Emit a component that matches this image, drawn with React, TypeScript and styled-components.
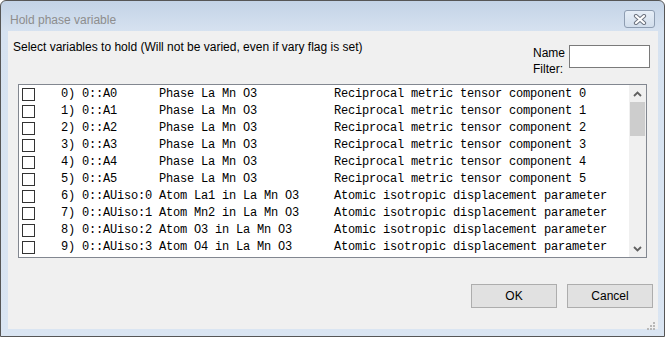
import styled, { createGlobalStyle } from 'styled-components';

// Data
const ROWS: { name: string; phase: string; desc: string }[] = [
  { name: '0::A0', phase: 'Phase La Mn O3', desc: 'Reciprocal metric tensor component 0' },
  { name: '0::A1', phase: 'Phase La Mn O3', desc: 'Reciprocal metric tensor component 1' },
  { name: '0::A2', phase: 'Phase La Mn O3', desc: 'Reciprocal metric tensor component 2' },
  { name: '0::A3', phase: 'Phase La Mn O3', desc: 'Reciprocal metric tensor component 3' },
  { name: '0::A4', phase: 'Phase La Mn O3', desc: 'Reciprocal metric tensor component 4' },
  { name: '0::A5', phase: 'Phase La Mn O3', desc: 'Reciprocal metric tensor component 5' },
  { name: '0::AUiso:0', phase: 'Atom La1 in La Mn O3', desc: 'Atomic isotropic displacement parameter' },
  { name: '0::AUiso:1', phase: 'Atom Mn2 in La Mn O3', desc: 'Atomic isotropic displacement parameter' },
  { name: '0::AUiso:2', phase: 'Atom O3 in La Mn O3', desc: 'Atomic isotropic displacement parameter' },
  { name: '0::AUiso:3', phase: 'Atom O4 in La Mn O3', desc: 'Atomic isotropic displacement parameter' },
];

const rowText = (i: number, r: { name: string; phase: string; desc: string }) =>
  `${String(i).padStart(2)}) ${r.name.padEnd(11)}${r.phase.padEnd(25)}${r.desc}`;

const GlobalStyle = createGlobalStyle`
  html, body {
    margin: 0;
    padding: 0;
    background: #ffffff;
  }
`;

const App = () => {
  return (
    <>
      <GlobalStyle />
      <S_Window>
        <S_TitleBar>
          <S_Title>Hold phase variable</S_Title>
          <S_CloseBtn>
            <svg width="16" height="11" viewBox="0 0 16 11">
              <path d="M4 2 L12 9 M12 2 L4 9" stroke="#6d7480" strokeWidth="4.2" strokeLinecap="round" />
              <path d="M4 2 L12 9 M12 2 L4 9" stroke="#ffffff" strokeWidth="2.2" strokeLinecap="round" />
            </svg>
          </S_CloseBtn>
        </S_TitleBar>
        <S_Client>
          <S_Header>
            <S_Label>Select variables to hold (Will not be varied, even if vary flag is set)</S_Label>
            <S_Filter>
              <S_FilterLabel>
                Name
                <br />
                Filter:
              </S_FilterLabel>
              <S_Input />
            </S_Filter>
          </S_Header>
          <S_List>
            <S_Rows>
              {ROWS.map((r, i) => (
                <S_Row key={r.name}>
                  <S_Check />
                  <S_RowText>{rowText(i, r)}</S_RowText>
                </S_Row>
              ))}
            </S_Rows>
            <S_Scrollbar>
              <S_Arrow>
                <svg width="9" height="6" viewBox="0 0 9 6">
                  <path d="M1 5 L4.5 1.5 L8 5" stroke="#606060" strokeWidth="1.8" fill="none" />
                </svg>
              </S_Arrow>
              <S_Track>
                <S_Thumb />
              </S_Track>
              <S_Arrow>
                <svg width="9" height="6" viewBox="0 0 9 6">
                  <path d="M1 1 L4.5 4.5 L8 1" stroke="#606060" strokeWidth="1.8" fill="none" />
                </svg>
              </S_Arrow>
            </S_Scrollbar>
          </S_List>
          <S_ButtonRow>
            <S_Button>OK</S_Button>
            <S_Button>Cancel</S_Button>
          </S_ButtonRow>
          <S_Grip>
            <svg width="8" height="8" viewBox="0 0 8 8">
              {[
                [6, 0],
                [6, 3],
                [3, 3],
                [6, 6],
                [3, 6],
                [0, 6],
              ].map(([x, y]) => (
                <rect key={`${x}-${y}`} x={x} y={y} width="2" height="2" fill="#b8b8b8" />
              ))}
            </svg>
          </S_Grip>
        </S_Client>
      </S_Window>
    </>
  );
};
export default App;

const S_Window = styled.div`
  width: 665px;
  height: 337px;
  box-sizing: border-box;
  border: 1px solid #565656;
  border-radius: 6px 6px 0 0;
  background: linear-gradient(#c3d3e6 0px, #d6e2f0 30px, #dae5f2 100%);
  display: flex;
  flex-direction: column;
  font-family: 'Liberation Sans', Arial, sans-serif;
  font-size: 12px;
  color: #000;
`;

const S_TitleBar = styled.div`
  height: 30px;
  display: flex;
  align-items: flex-start;
  justify-content: space-between;
  padding: 0 9px 0 9px;
`;

const S_Title = styled.div`
  margin-top: 12px;
  color: #8d8d8d;
  font-size: 12px;
  line-height: 15px;
`;

const S_CloseBtn = styled.div`
  margin-top: 9px;
  width: 31px;
  height: 18px;
  box-sizing: border-box;
  border: 1px solid #8e9db1;
  border-radius: 3px;
  background: linear-gradient(#e6eef7, #d2deec);
  display: flex;
  align-items: center;
  justify-content: center;
`;

const S_Client = styled.div`
  position: relative;
  flex: 1;
  margin: 0 6px 7px 7px;
  background: #f0f0f0;
  display: flex;
  flex-direction: column;
`;

const S_Header = styled.div`
  height: 53px;
  display: flex;
  justify-content: space-between;
  padding: 0 8px 0 5px;
`;

const S_Label = styled.div`
  margin-top: 9px;
  line-height: 15px;
`;

const S_Filter = styled.div`
  margin-top: 14px;
  display: flex;
  align-items: flex-start;
  gap: 4px;
`;

const S_FilterLabel = styled.div`
  line-height: 16px;
`;

const S_Input = styled.div`
  width: 81px;
  height: 23px;
  box-sizing: border-box;
  border: 1px solid #7a7a7a;
  background: #fff;
`;

const S_List = styled.div`
  height: 174px;
  margin: 0 11px 0 10px;
  box-sizing: border-box;
  border: 1px solid #828790;
  background: #fff;
  display: flex;
`;

const S_Rows = styled.div`
  flex: 1;
  padding-top: 1px;
  overflow: hidden;
`;

const S_Row = styled.div`
  height: 17px;
  display: flex;
  align-items: center;
  padding-left: 3px;
`;

const S_Check = styled.div`
  width: 13px;
  height: 13px;
  box-sizing: border-box;
  border: 1px solid #333;
  background: #fff;
`;

const S_RowText = styled.pre`
  margin: 0 0 0 19px;
  font-family: 'Liberation Mono', 'Courier New', monospace;
  font-size: 12px;
  letter-spacing: -0.2px;
  line-height: 17px;
  color: #000;
  white-space: pre;
`;

const S_Scrollbar = styled.div`
  width: 17px;
  background: #f0f0f0;
  display: flex;
  flex-direction: column;
`;

const S_Arrow = styled.div`
  height: 17px;
  display: flex;
  align-items: center;
  justify-content: center;
`;

const S_Track = styled.div`
  flex: 1;
  padding: 0 1px;
`;

const S_Thumb = styled.div`
  height: 34px;
  background: #cdcdcd;
`;

const S_ButtonRow = styled.div`
  display: flex;
  justify-content: flex-end;
  gap: 10px;
  margin-top: 26px;
  padding-right: 5px;
`;

const S_Button = styled.div`
  width: 86px;
  height: 24px;
  box-sizing: border-box;
  border: 1px solid #adadad;
  background: #e1e1e1;
  display: flex;
  align-items: center;
  justify-content: center;
`;

const S_Grip = styled.div`
  position: absolute;
  right: 3px;
  bottom: 2px;
  width: 8px;
  height: 8px;
`;
